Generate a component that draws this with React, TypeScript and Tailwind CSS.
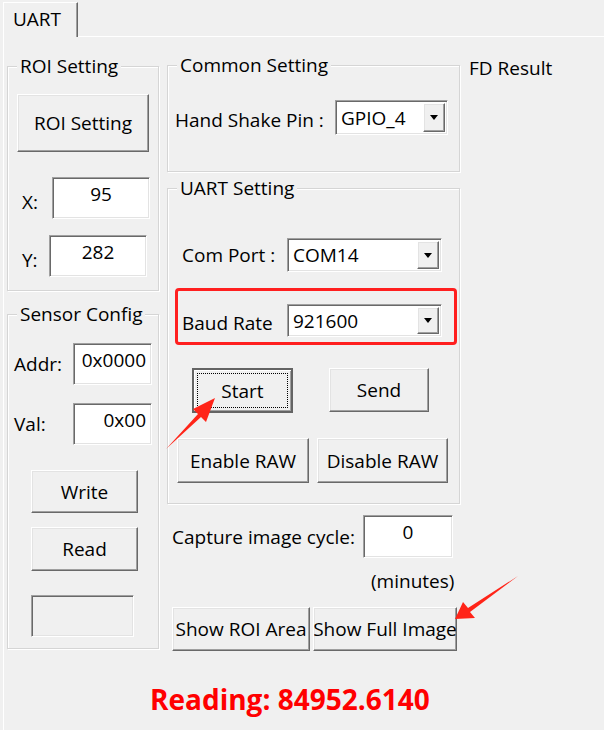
import React from 'react';

const raised =
  'border border-t-white border-l-white border-r-[#696969] border-b-[#696969] shadow-[inset_-1px_-1px_0_#a0a0a0,inset_1px_1px_0_#e3e3e3]';
const sunken =
  'border border-t-[#a0a0a0] border-l-[#a0a0a0] border-r-white border-b-white shadow-[inset_1px_1px_0_#696969,inset_-1px_-1px_0_#e3e3e3]';

type Props = { className?: string; children?: React.ReactNode };

const Button = ({ className = '', children }: Props) => (
  <div className={`${raised} bg-[#f0f0f0] flex items-center justify-center whitespace-nowrap overflow-hidden leading-[22px] ${className}`}>
    {children}
  </div>
);

const Edit = ({ className = '', children }: Props) => (
  <div className={`${sunken} bg-white flex pt-[5px] px-[5px] leading-[22px] ${className}`}>{children}</div>
);

const Combo = ({ className = '', children }: Props) => (
  <div className={`${sunken} bg-white flex items-stretch p-[2px] ${className}`}>
    <div className="flex-1 flex items-center pl-[3px] leading-[22px]">{children}</div>
    <div className={`${raised} w-[22px] bg-[#f0f0f0] flex items-center justify-center`}>
      <svg width="8" height="5" viewBox="0 0 8 5">
        <polygon points="0,0 8,0 4,5" fill="#000" />
      </svg>
    </div>
  </div>
);

const GroupBox = ({ title, className = '', children }: Props & { title: string }) => (
  <div className={`relative border border-[#d5d5d5] shadow-[inset_1px_1px_0_#fff,1px_1px_0_#fff] ${className}`}>
    <div className="absolute left-[9px] top-[-12px] bg-[#f0f0f0] px-[3px] leading-[22px] whitespace-nowrap">{title}</div>
    {children}
  </div>
);

export default function App() {
  return (
    <div className="relative w-[604px] h-[730px] overflow-hidden bg-[#f0f0f0] text-black text-[19px] font-['Open_Sans',sans-serif] flex flex-col">
      {/* tab strip */}
      <div className="pt-[2px] pl-[3px] flex">
        <div className="relative z-10 -mb-[1px] w-[75px] h-[35px] bg-[#f0f0f0] border-t border-l border-white border-r border-r-[#696969] shadow-[inset_-1px_0_0_#a0a0a0] pl-[9px] pt-[5px] leading-[22px]">
          UART
        </div>
      </div>

      {/* tab page */}
      <div className="ml-[3px] flex-1 border-l border-t border-white">
        <div className="flex items-start pl-[3px]">
          {/* left column */}
          <div className="w-[152px] mt-[29px] flex flex-col">
            <GroupBox title="ROI Setting" className="h-[225px]">
              <Button className="mt-[27px] ml-[9px] w-[132px] h-[58px]">ROI Setting</Button>
              <div className="mt-[25px] flex items-center">
                <span className="ml-[14px] w-[30px] mt-[8px] leading-[22px]">X:</span>
                <Edit className="w-[98px] h-[42px] justify-center">95</Edit>
              </div>
              <div className="mt-[16px] flex items-center">
                <span className="ml-[14px] w-[27px] mt-[8px] leading-[22px]">Y:</span>
                <Edit className="w-[98px] h-[42px] justify-center">282</Edit>
              </div>
            </GroupBox>

            <GroupBox title="Sensor Config" className="mt-[23px] h-[335px]">
              <div className="mt-[28px] flex items-center">
                <span className="ml-[6px] w-[59px] leading-[22px]">Addr:</span>
                <Edit className="w-[79px] h-[42px] justify-end">0x0000</Edit>
              </div>
              <div className="mt-[18px] flex items-center">
                <span className="ml-[6px] w-[59px] leading-[22px]">Val:</span>
                <Edit className="w-[79px] h-[42px] justify-end">0x00</Edit>
              </div>
              <Button className="mt-[25px] ml-[23px] w-[107px] h-[43px]">Write</Button>
              <Button className="mt-[14px] ml-[23px] w-[107px] h-[44px]">Read</Button>
              <div className={`${sunken} mt-[24px] ml-[23px] w-[103px] h-[42px] bg-[#f0f0f0]`} />
            </GroupBox>
          </div>

          {/* middle column */}
          <div className="ml-[8px] w-[293px] mt-[28px] flex flex-col">
            <GroupBox title="Common Setting" className="h-[107px]">
              <div className="mt-[34px] flex items-center">
                <span className="ml-[7px] w-[160px] mt-[5px] leading-[22px] whitespace-nowrap">Hand Shake Pin :</span>
                <Combo className="w-[113px] h-[35px]">GPIO_4</Combo>
              </div>
            </GroupBox>

            <GroupBox title="UART Setting" className="mt-[16px] h-[316px]">
              <div className="mt-[49px] flex items-center">
                <span className="ml-[14px] w-[105px] leading-[22px] whitespace-nowrap">Com Port :</span>
                <Combo className="w-[155px] h-[34px]">COM14</Combo>
              </div>
              <div className="mt-[16px] ml-[7px] w-[282px] h-[57px] border-[3px] border-[#ff1f1f] rounded-[4px] flex items-start pt-[13px] pl-[4px]">
                <span className="w-[105px] mt-[8px] leading-[22px] whitespace-nowrap">Baud Rate</span>
                <Combo className="w-[155px] h-[33px]">921600</Combo>
              </div>
              <div className="mt-[23px] flex items-start">
                <div className="ml-[24px] w-[101px] h-[45px] border-2 border-[#646464] shadow-[inset_1px_1px_0_#fff,inset_-1px_-1px_0_#a0a0a0] bg-[#f0f0f0] p-[3px]">
                  <div className="w-full h-full border border-dotted border-black flex items-center justify-center leading-[22px]">
                    Start
                  </div>
                </div>
                <Button className="ml-[36px] w-[100px] h-[44px]">Send</Button>
              </div>
              <div className="mt-[25px] flex items-start">
                <Button className="ml-[9px] w-[132px] h-[45px]">Enable RAW</Button>
                <Button className="ml-[8px] w-[131px] h-[45px]">Disable RAW</Button>
              </div>
            </GroupBox>

            <div className="mt-[11px] flex items-center">
              <span className="ml-[5px] w-[191px] leading-[22px] whitespace-nowrap">Capture image cycle:</span>
              <Edit className="w-[90px] h-[43px] justify-center">0</Edit>
            </div>
            <div className="mt-[13px] ml-[204px] leading-[20px]">(minutes)</div>
            <div className="mt-[16px] flex items-start">
              <Button className="ml-[5px] w-[138px] h-[44px]">Show ROI Area</Button>
              <Button className="ml-[3px] w-[144px] h-[44px]">Show Full Image</Button>
            </div>
          </div>

          {/* right column */}
          <div className="ml-[9px] mt-[20px] leading-[22px] whitespace-nowrap">FD Result</div>
        </div>

        <div className="mt-[31px] ml-[146px] leading-[34px] text-[28px] font-bold text-[#ff0000] whitespace-nowrap">
          Reading: 84952.6140
        </div>
      </div>

      {/* annotation arrows */}
      <svg className="absolute inset-0 pointer-events-none" width="604" height="730" viewBox="0 0 604 730">
        <polygon points="166,449 198,414 193,409 215,398 206,422 201,417" fill="#ff2418" />
        <polygon points="518,576 470,612 475,618 455,619 463,602 468,608" fill="#ff2418" />
      </svg>
    </div>
  );
}
